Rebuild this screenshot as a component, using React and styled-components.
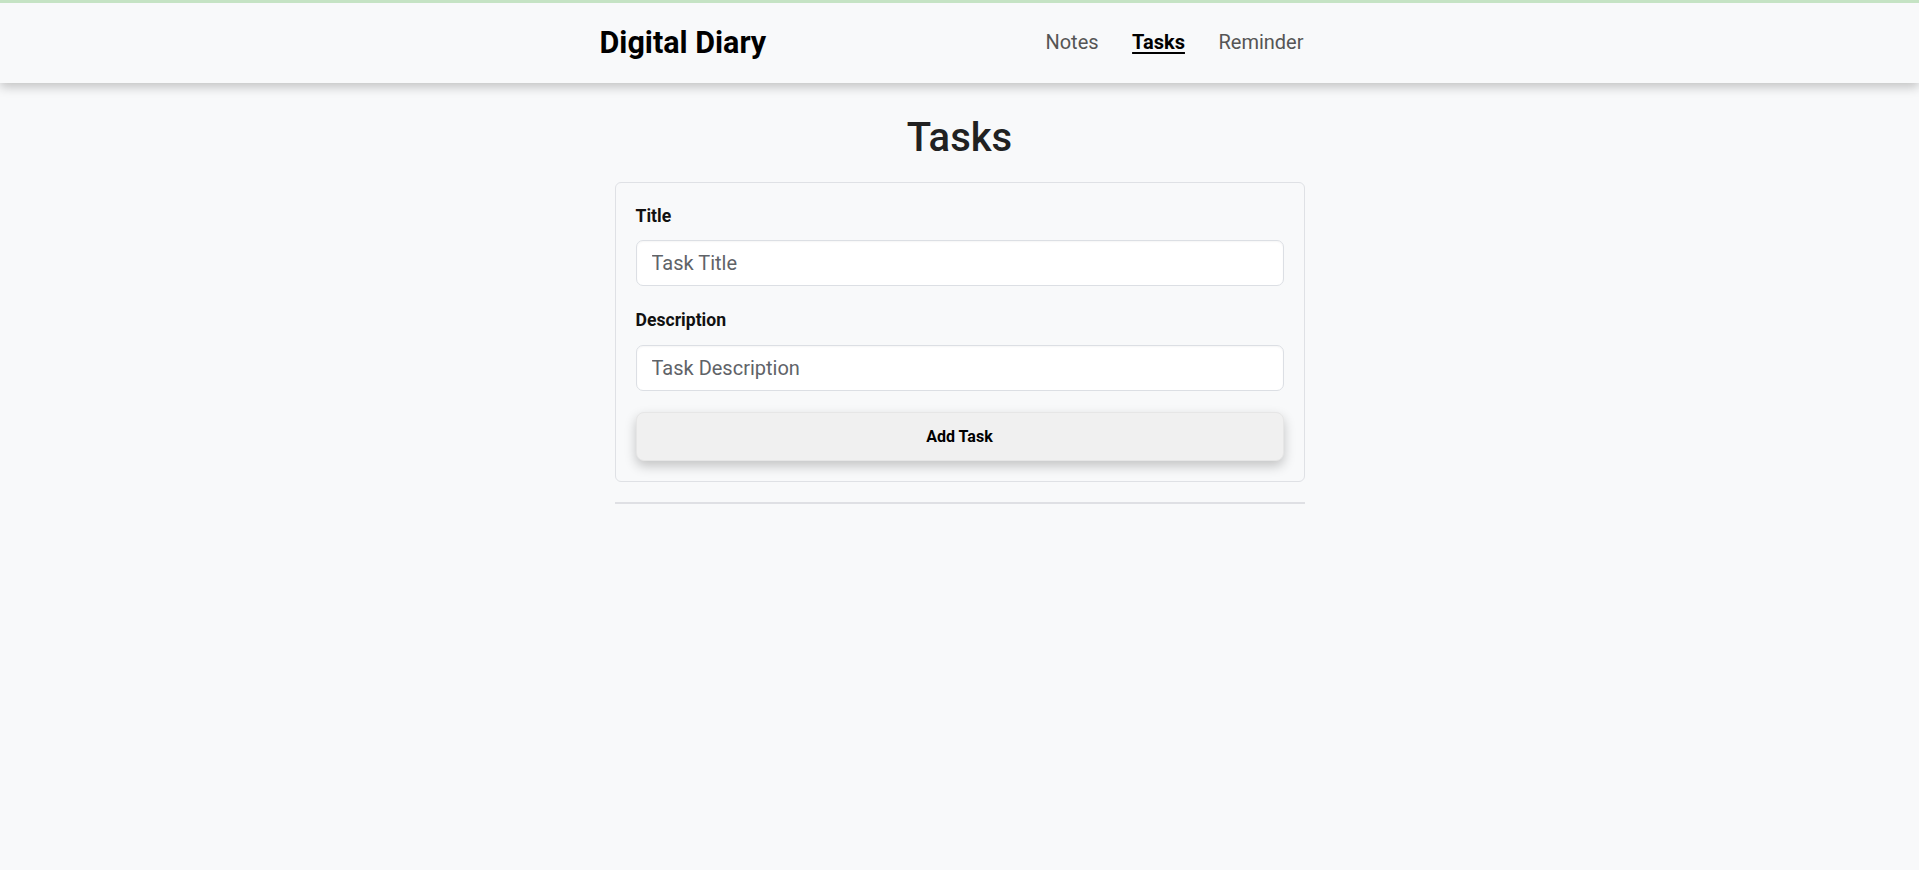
import React from 'react'
import styled, { createGlobalStyle } from "styled-components"

const GlobalStyle = createGlobalStyle`
  body {
    margin: 0;
    background: #f8f9fa;
    font-family: Roboto, "Liberation Sans", Arial, sans-serif;
    color: #212529;
  }
  * { box-sizing: border-box; }
`;

const Header = styled.header`
  border-top: 3px solid #c5e3c4;
  background: #f8f9fa;
  height: 83px;
  box-shadow: 0px 4px 10px rgba(0, 0, 0, 0.22);
`;

const HeaderInner = styled.div`
  max-width: 720px;
  height: 80px;
  padding-bottom: 2px;
  margin: 0 auto;
  display: flex;
  align-items: center;
  justify-content: space-between;
`;

const Brand = styled.span`
  font-size: 30.5px;
  font-weight: 700;
  color: #000;
`;

const Nav = styled.nav`
  display: flex;
  align-items: center;
`;

const NavLink = styled.a`
  padding: 0 16.75px;
  font-size: 20px;
  cursor: pointer;
  color: ${(p) => (p.$active ? "#000" : "#555")};
  font-weight: ${(p) => (p.$active ? 700 : 400)};
  text-decoration: ${(p) => (p.$active ? "underline" : "none")};
  text-underline-offset: 3px;

  &:last-child {
    padding-right: 16px;
  }
`;

const Main = styled.main`
  width: 690px;
  margin: 0 auto;
  padding-top: 31px;
`;

const PageTitle = styled.h1`
  margin: 0 0 20px;
  text-align: center;
  font-size: 40px;
  font-weight: 500;
  line-height: 48px;
  color: #212121;
`;

const Card = styled.form`
  border: 1px solid #dfe1e5;
  border-radius: 6px;
  padding: 20px;
  background: #f8f9fa;
`;

const Field = styled.div`
  margin-bottom: 21px;
`;

const Label = styled.label`
  display: block;
  font-size: 17.6px;
  font-weight: 700;
  line-height: 26.4px;
  color: #111;
  margin-bottom: 11px;
`;

const Input = styled.input`
  display: block;
  width: 100%;
  height: 46px;
  padding: 0 15px;
  font-family: inherit;
  font-size: 20px;
  color: #333;
  background: #fff;
  border: 1px solid #dcdfe4;
  border-radius: 7px;
  outline: none;
  box-shadow: inset 0 1px 2px rgba(0, 0, 0, 0.04);

  &::placeholder {
    color: #5f6368;
  }
`;

const Button = styled.button`
  display: block;
  width: 100%;
  height: 49px;
  font-family: inherit;
  font-size: 16px;
  font-weight: 700;
  color: #000;
  background: #f0f0f0;
  border: 1px solid #e6e6e6;
  border-radius: 8px;
  box-shadow: 0px 5px 12px rgba(0, 0, 0, 0.22);
  cursor: pointer;
`;

const Divider = styled.hr`
  margin: 20px 0 0;
  border: none;
  border-top: 2px solid #dfe0e4;
`;

export default function App() {
    const onSubmit = (e) => {
        e.preventDefault();
    }
    return (
        <>
            <GlobalStyle />
            <Header>
                <HeaderInner>
                    <Brand>Digital Diary</Brand>
                    <Nav>
                        <NavLink>Notes</NavLink>
                        <NavLink $active>Tasks</NavLink>
                        <NavLink>Reminder</NavLink>
                    </Nav>
                </HeaderInner>
            </Header>
            <Main>
                <PageTitle>Tasks</PageTitle>
                <Card onSubmit={onSubmit}>
                    <Field>
                        <Label>Title</Label>
                        <Input placeholder="Task Title" />
                    </Field>
                    <Field>
                        <Label>Description</Label>
                        <Input placeholder="Task Description" />
                    </Field>
                    <Button type="submit">Add Task</Button>
                </Card>
                <Divider />
            </Main>
        </>
    )
}
